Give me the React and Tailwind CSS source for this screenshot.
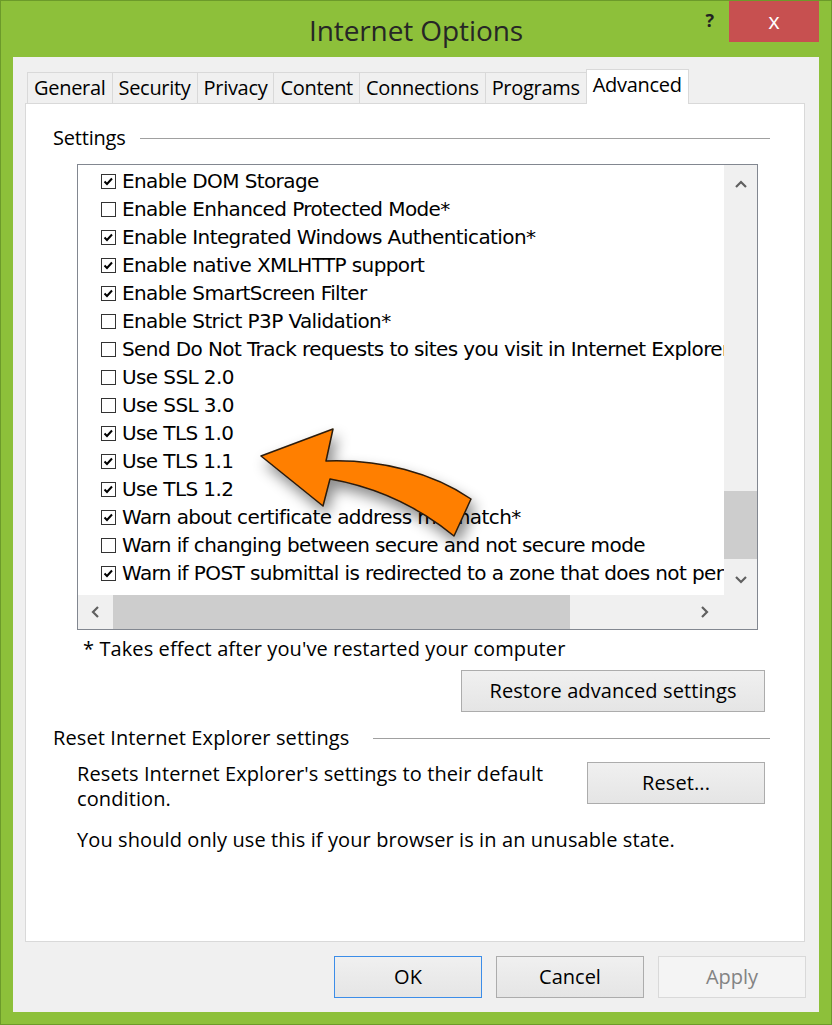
import React from "react";

const items = [
  [true, "Enable DOM Storage"],
  [false, "Enable Enhanced Protected Mode*"],
  [true, "Enable Integrated Windows Authentication*"],
  [true, "Enable native XMLHTTP support"],
  [true, "Enable SmartScreen Filter"],
  [false, "Enable Strict P3P Validation*"],
  [false, "Send Do Not Track requests to sites you visit in Internet Explorer"],
  [false, "Use SSL 2.0"],
  [false, "Use SSL 3.0"],
  [true, "Use TLS 1.0"],
  [true, "Use TLS 1.1"],
  [true, "Use TLS 1.2"],
  [true, "Warn about certificate address mismatch*"],
  [false, "Warn if changing between secure and not secure mode"],
  [true, "Warn if POST submittal is redirected to a zone that does not permit posts"],
];

const tabs = ["General", "Security", "Privacy", "Content", "Connections", "Programs"];

function CheckBox({checked}) {
  return (
    <svg width="15" height="15" viewBox="0 0 15 15" className="shrink-0">
      <rect x="0.5" y="0.5" width="14" height="14" fill="#fff" stroke="#333" />
      {checked && <path d="M3.5 7.5 L6 10 L11 4.5" fill="none" stroke="#000" strokeWidth="2" />}
    </svg>
  );
}

function Chevron({dir}) {
  const d = {
    up: "M2 9 L7 4 L12 9",
    down: "M2 5 L7 10 L12 5",
    left: "M9 2 L4 7 L9 12",
    right: "M5 2 L10 7 L5 12",
  }[dir];
  return (
    <svg width="14" height="14" viewBox="0 0 14 14">
      <path d={d} fill="none" stroke="#606060" strokeWidth="2.2" />
    </svg>
  );
}

function Btn({children, className = ""}) {
  return (
    <div className={"flex items-center justify-center border border-[#acacac] bg-gradient-to-b from-[#f0f0f0] to-[#e5e5e5] text-[20px] text-black " + className}>
      {children}
    </div>
  );
}

export default function App() {
  return (
    <div className="w-[832px] h-[1025px] bg-[#8dc03a] border border-[#6c9a2a] flex flex-col font-['Open_Sans','Noto_Sans',sans-serif] text-black relative overflow-hidden">
      {/* title bar */}
      <div className="h-[56px] shrink-0 flex relative">
        <div className="flex-1 flex items-center justify-center pt-[2px] text-[28px] text-[#262626] tracking-[-0.1px]">
          Internet Options
        </div>
        <div className="absolute right-[117px] top-[6px] text-[18px] font-bold text-[#222]">?</div>
        <div className="absolute right-[12px] top-0 w-[90px] h-[41px] bg-[#c75050] flex items-center justify-center text-white text-[22px] pb-[3px]">x</div>
      </div>

      {/* client area */}
      <div className="flex-1 mx-[12px] mb-[12px] bg-[#f0f0f0] flex flex-col">
        {/* tabs */}
        <div className="flex items-end h-[46px] pl-[14px] shrink-0">
          {tabs.map((t) => (
            <div key={t} className="h-[31px] px-[6px] border border-[#d9d9d9] border-b-0 -mr-px bg-[#f0f0f0] text-[20px] leading-[30px] tracking-[-0.3px]">
              {t}
            </div>
          ))}
          <div className="h-[35px] px-[6px] border border-[#d9d9d9] border-b-0 bg-white text-[20px] leading-[30px] tracking-[-0.3px] relative top-px z-10">
            Advanced
          </div>
        </div>

        {/* tab panel */}
        <div className="ml-[12px] mr-[14px] h-[839px] bg-white border border-[#d9d9d9] flex flex-col shrink-0 tracking-[0.1px]">
          <div className="flex items-center pl-[27px] pr-[34px] mt-[20px] h-[28px]">
            <span className="text-[20px] tracking-[-0.2px]">Settings</span>
            <div className="flex-1 h-px bg-[#a0a0a0] ml-[14px]"></div>
          </div>

          <div className="ml-[51px] mt-[12px] w-[681px] h-[466px] border border-[#828790] flex flex-col">
            <div className="flex h-[430px]">
              <div className="flex-1 overflow-hidden pl-[23px] pt-[2px]">
                {items.map(([c, t]) => (
                  <div key={t} className="h-[28px] flex items-center gap-[6px] whitespace-nowrap text-[20px] font-['DejaVu_Sans',sans-serif] tracking-[-0.6px]">
                    <CheckBox checked={c} />
                    <span>{t}</span>
                  </div>
                ))}
              </div>
              <div className="w-[33px] bg-[#f0f0f0] flex flex-col">
                <div className="h-[40px] flex items-center justify-center"><Chevron dir="up" /></div>
                <div className="flex-1 flex flex-col justify-end">
                  <div className="h-[68px] bg-[#cdcdcd] mb-[3px]"></div>
                </div>
                <div className="h-[33px] flex items-center justify-center"><Chevron dir="down" /></div>
              </div>
            </div>
            <div className="flex-1 bg-[#f0f0f0] flex">
              <div className="w-[35px] flex items-center justify-center"><Chevron dir="left" /></div>
              <div className="w-[457px] bg-[#cdcdcd]"></div>
              <div className="w-[155px] flex items-center justify-end pr-[14px]"><Chevron dir="right" /></div>
            </div>
          </div>

          <div className="ml-[57px] mt-[4px] text-[20px]">* Takes effect after you've restarted your computer</div>

          <div className="flex justify-end pr-[39px] mt-[6px]">
            <Btn className="w-[304px] h-[42px]">Restore advanced settings</Btn>
          </div>

          <div className="flex items-center pl-[27px] pr-[34px] mt-[12px] h-[28px]">
            <span className="text-[20px]">Reset Internet Explorer settings</span>
            <div className="flex-1 h-px bg-[#a0a0a0] ml-[24px]"></div>
          </div>

          <div className="flex pl-[51px] pr-[39px] mt-[9px]">
            <div className="flex-1 text-[20px] leading-[25px]">
              Resets Internet Explorer's settings to their default<br />condition.
            </div>
            <Btn className="w-[178px] h-[42px] mt-[1px]">Reset...</Btn>
          </div>

          <div className="pl-[51px] mt-[14px] text-[20px]">
            You should only use this if your browser is in an unusable state.
          </div>
        </div>

        {/* bottom buttons */}
        <div className="flex justify-end gap-[14px] pr-[13px] mt-[14px]">
          <Btn className="w-[148px] h-[42px] !border-[#3c8de8]">OK</Btn>
          <Btn className="w-[148px] h-[42px]">Cancel</Btn>
          <div className="w-[148px] h-[42px] border border-[#d9d9d9] bg-[#f4f4f4] flex items-center justify-center text-[20px] text-[#838383]">Apply</div>
        </div>
      </div>

      {/* orange arrow overlay */}
      <svg className="absolute left-0 top-0 pointer-events-none" width="832" height="1025" viewBox="0 0 832 1025">
        <defs>
          <filter id="sh" x="-50%" y="-50%" width="200%" height="200%">
            <feDropShadow dx="4" dy="8" stdDeviation="7" floodColor="#000" floodOpacity="0.45" />
          </filter>
        </defs>
        <path
          d="M260 455 L332 428 L325 460 C380 458 432 472 470 498 L453 535 C420 508 380 487 329 478 L322 505 Z"
          fill="#ff7f00"
          stroke="#2a1a0a"
          strokeWidth="1.5"
          strokeLinejoin="round"
          filter="url(#sh)"
        />
      </svg>
    </div>
  );
}
